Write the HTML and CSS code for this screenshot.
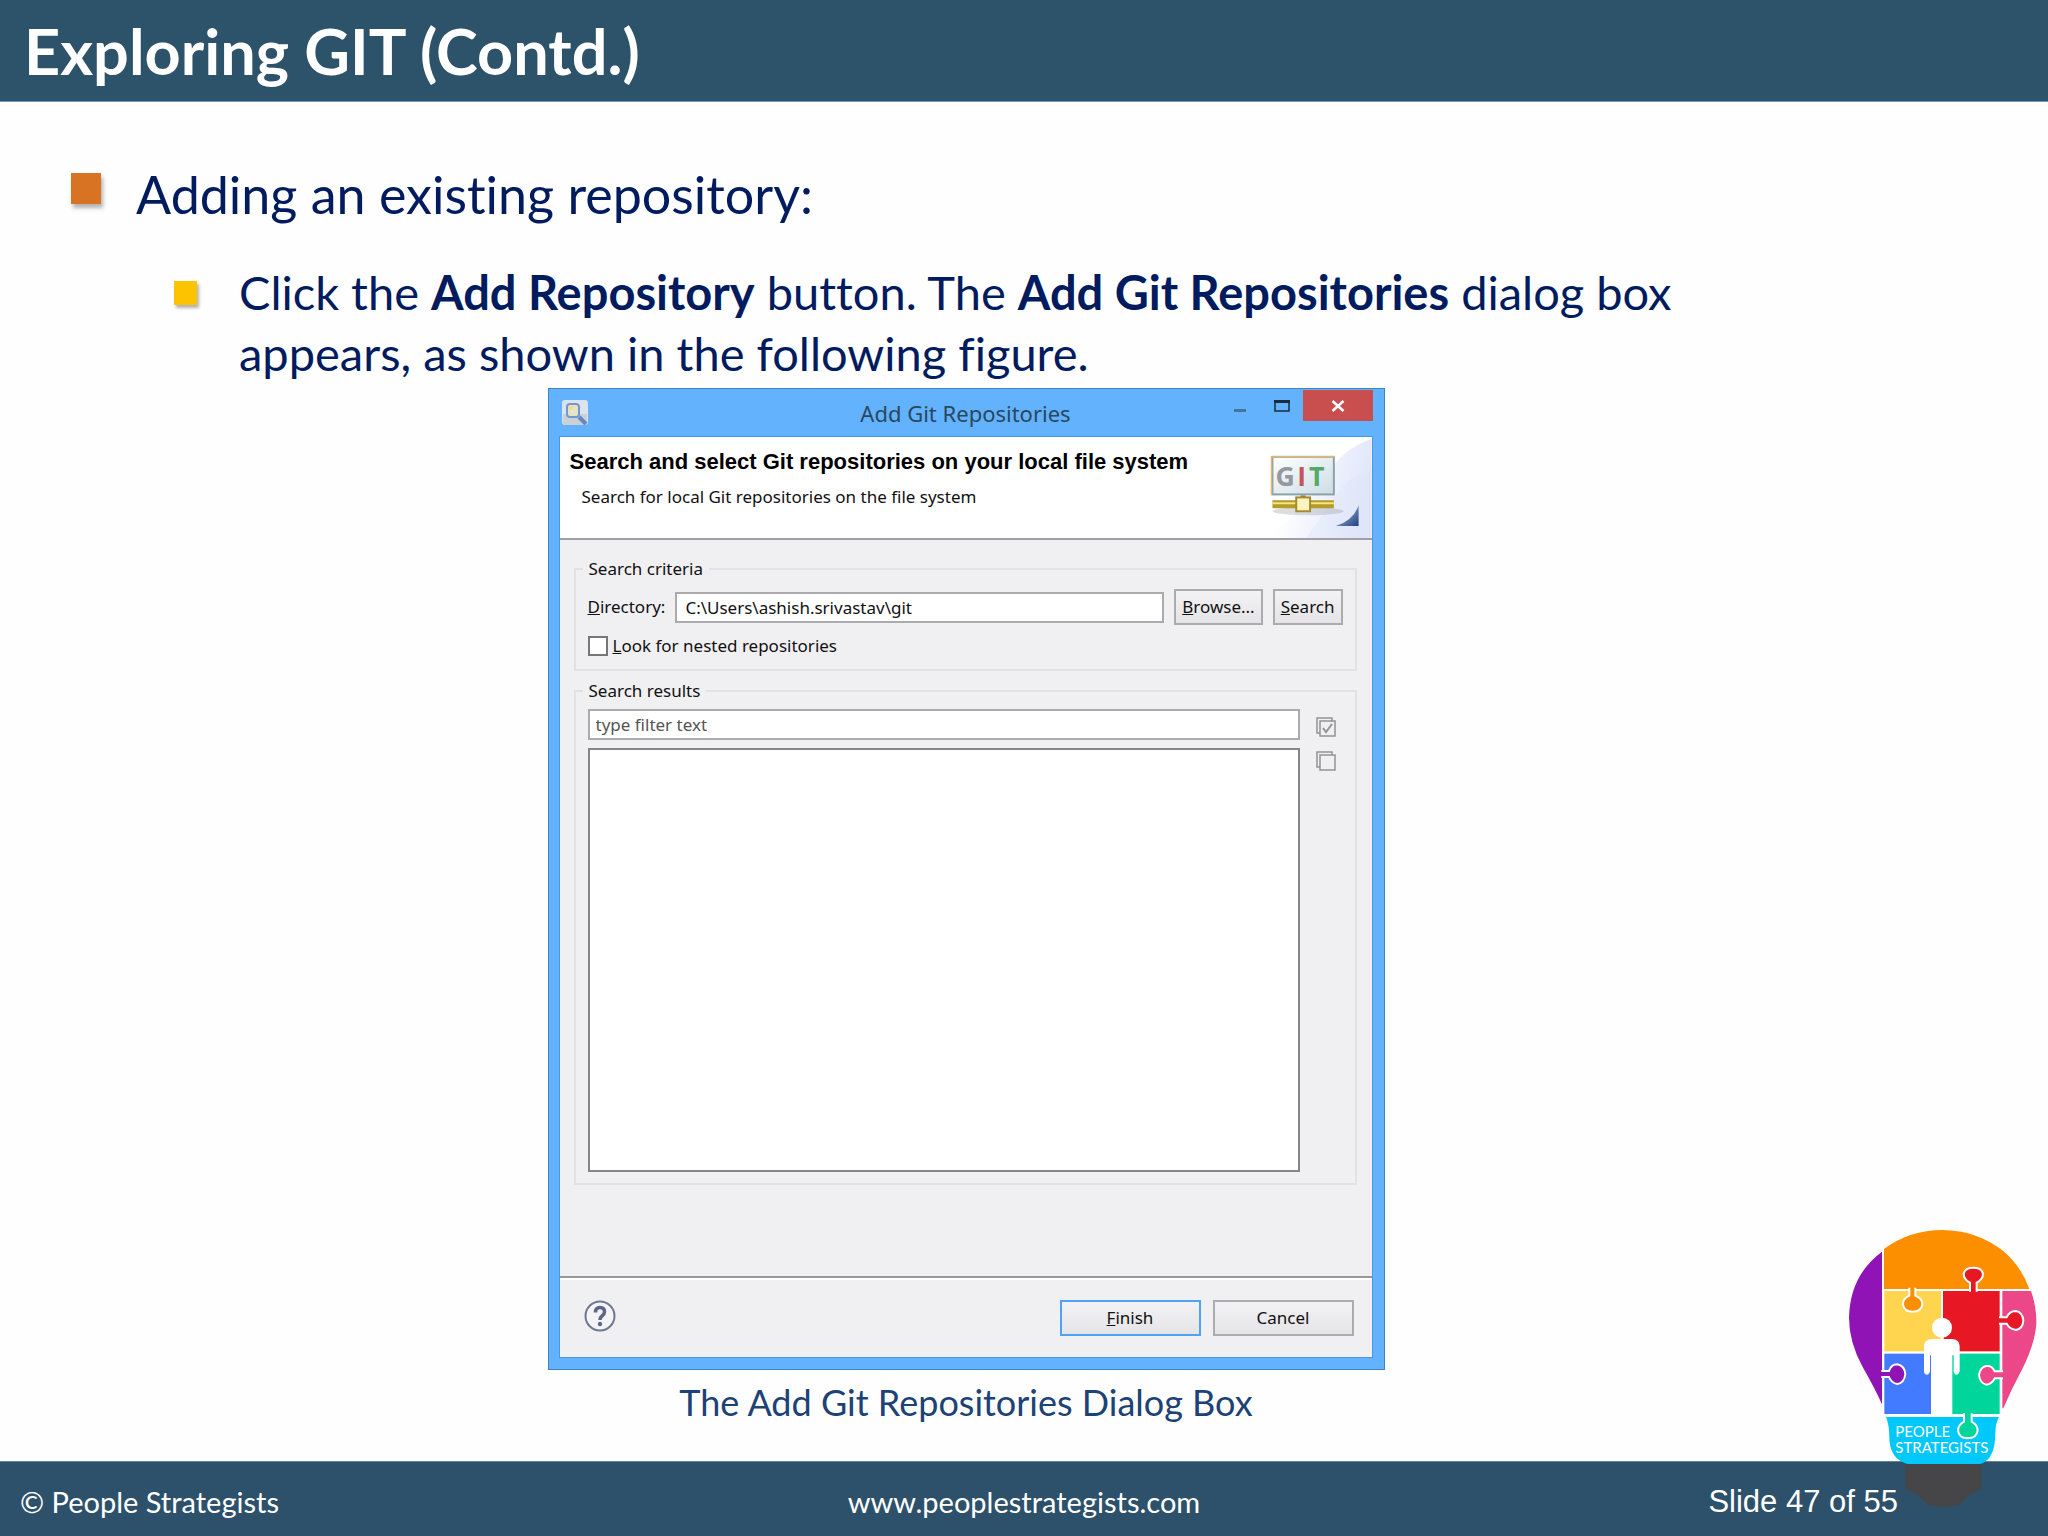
FILE: index.html
```html
<!DOCTYPE html>
<html lang="en">
<head>
    <meta charset="UTF-8">
    <meta name="viewport" content="width=device-width, initial-scale=1.0">
    <title>Exploring GIT (Contd.)</title>
    <link rel="stylesheet" href="styles.css">
</head>
<body>
    <header class="slide-header">
        <h1>Exploring GIT (Contd.)</h1>
    </header>

    <main class="slide-body">
        <ul class="points">
            <li class="point">Adding an existing repository:</li>
            <li class="subpoint">
                <p>Click the <b>Add Repository</b> button. The <b>Add Git Repositories</b> dialog box<br>appears, as shown in the following figure.</p>
            </li>
        </ul>

        <figure class="figure">
            <div class="dialog">
                <div class="titlebar">
                    <svg class="app-icon" viewBox="0 0 26 26">
                        <rect x="0" y="0" width="26" height="25" rx="3" fill="#dde3ec"/>
                        <path d="M1 14h24v8q0 3-3 3H4q-3 0-3-3z" fill="#cbcfd6"/>
                        <rect x="5" y="4" width="12" height="13" rx="3" fill="#e9e3c6" stroke="#6e9ad2" stroke-width="2"/>
                        <path d="M7 7l5-1-5 6z" fill="#fbd98a"/>
                        <path d="M17 17l7 7" stroke="#6488c0" stroke-width="4"/>
                    </svg>
                    <span class="titlebar-text">Add Git Repositories</span>
                    <div class="window-buttons">
                        <button class="win-btn" aria-label="Minimize">
                            <svg viewBox="0 0 18 14"><path d="M3 11.500h12" stroke="#45749f" stroke-width="3"/></svg>
                        </button>
                        <button class="win-btn" aria-label="Maximize">
                            <svg viewBox="0 0 18 14"><path d="M2 2h14v10H2z" fill="none" stroke="#1b2c3a" stroke-width="1.500"/><path d="M1 2.500h16" stroke="#1b2c3a" stroke-width="3"/></svg>
                        </button>
                        <button class="win-btn win-close" aria-label="Close">
                            <svg viewBox="0 0 18 14"><path d="M3.500 2l11 10M14.500 2l-11 10" stroke="#fff" stroke-width="2.500"/></svg>
                        </button>
                    </div>
                </div>

                <div class="dialog-content">
                    <div class="banner">
                        <div class="banner-text">
                            <h2>Search and select Git repositories on your local file system</h2>
                            <p>Search for local Git repositories on the file system</p>
                        </div>
                        <svg class="banner-icon" viewBox="0 0 106 102">
                            <defs>
                                <linearGradient id="sky" x1="0" y1="0.300" x2="1" y2="0.500">
                                    <stop offset="0.200" stop-color="#fff"/>
                                    <stop offset="1" stop-color="#dfe5fa"/>
                                </linearGradient>
                                <linearGradient id="screen" x1="0" y1="0" x2="1" y2="1">
                                    <stop offset="0" stop-color="#fff"/>
                                    <stop offset="1" stop-color="#cbdde6"/>
                                </linearGradient>
                                <linearGradient id="corner" x1="0" y1="0" x2="1" y2="1">
                                    <stop offset="0" stop-color="#b9cbe4"/>
                                    <stop offset="1" stop-color="#1f3f80"/>
                                </linearGradient>
                            </defs>
                            <path d="M106 2Q76 12 60 40T0 102H106z" fill="url(#sky)"/>
                            <path d="M106 33Q86 38 72 56L40 102H106z" fill="#dfe5fa" opacity=".4"/>
                            <ellipse cx="42" cy="75" rx="36" ry="4" fill="#8a8f9c" opacity=".3"/>
                            <rect x="6" y="20" width="62" height="38" fill="url(#screen)" stroke="#8ba2a4" stroke-width="2"/>
                            <path d="M5 58V20H69" fill="none" stroke="#e3b672" stroke-width="1.500"/>
                            <g class="git-letters">
                                <text x="9" y="49" fill="#97999c">G</text>
                                <text x="31" y="49" fill="#c4555d">I</text>
                                <text x="43" y="49" fill="#57a866">T</text>
                            </g>
                            <path d="M37 59v5" stroke="#8c8340" stroke-width="5"/>
                            <path d="M6 68h62" stroke="#b59b27" stroke-width="8"/>
                            <path d="M6 67h62" stroke="#f4e58b" stroke-width="2"/>
                            <rect x="30" y="61" width="14" height="14" fill="#fdf3c0" stroke="#a48a2a" stroke-width="2"/>
                            <path d="M93 69V90H70Q88 84 93 69z" fill="url(#corner)"/>
                        </svg>
                    </div>

                    <form class="wizard">
                        <fieldset class="group">
                            <legend>Search criteria</legend>
                            <div class="directory-row">
                                <label for="directory"><u>D</u>irectory:</label>
                                <input type="text" id="directory" value="C:\Users\ashish.srivastav\git">
                                <button type="button" class="btn"><u>B</u>rowse...</button>
                                <button type="button" class="btn"><u>S</u>earch</button>
                            </div>
                            <div class="nested-row">
                                <input type="checkbox" id="nested">
                                <label for="nested"><u>L</u>ook for nested repositories</label>
                            </div>
                        </fieldset>

                        <fieldset class="group">
                            <legend>Search results</legend>
                            <div class="results">
                                <div class="results-main">
                                    <input type="text" aria-label="Filter" placeholder="type filter text">
                                    <div class="results-list"></div>
                                </div>
                                <div class="results-tools">
                                    <button type="button" class="tool" aria-label="Select all">
                                        <svg viewBox="0 0 20 20" fill="none" stroke="#929297" stroke-width="1.500"><path d="M4 16H1V1h15v3"/><rect x="4" y="4" width="15" height="15"/><path d="M7 11l3 4 6-8" stroke-width="2"/></svg>
                                    </button>
                                    <button type="button" class="tool" aria-label="Deselect all">
                                        <svg viewBox="0 0 20 20" fill="none" stroke="#929297" stroke-width="1.500"><path d="M4 16H1V1h15v3"/><rect x="4" y="4" width="15" height="15"/></svg>
                                    </button>
                                </div>
                            </div>
                        </fieldset>
                    </form>

                    <div class="dialog-footer">
                        <button type="button" class="tool help" aria-label="Help">
                            <svg viewBox="0 0 32 32">
                                <circle cx="16" cy="16" r="14.500" fill="#f4f4f7" stroke="#6f7891" stroke-width="2"/>
                                <path d="M11.500 12.500q0-5 4.500-5t4.500 4.300q0 2.400-2.500 4.200-2 1.500-2 4" fill="none" stroke="#5d6788" stroke-width="3.500"/>
                                <circle cx="16" cy="24" r="2.200" fill="#5d6788"/>
                            </svg>
                        </button>
                        <button type="button" class="btn btn-wide btn-default"><u>F</u>inish</button>
                        <button type="button" class="btn btn-wide">Cancel</button>
                    </div>
                </div>
            </div>
            <figcaption>The Add Git Repositories Dialog Box</figcaption>
        </figure>
    </main>

    <footer class="slide-footer">
        <span class="copyright">© People Strategists</span>
        <span class="site">www.peoplestrategists.com</span>
        <span class="page-number">Slide 47 of 55</span>
        <svg class="logo" viewBox="84 56 570 837" role="img" aria-label="People Strategists">
            <!-- bulb base -->
            <path d="M256 755H484V836Q440 852 420 884Q370 894 324 884Q300 852 256 836z" fill="#464547"/>
            <path d="M198 620H537Q526 640 526 668Q526 748 480 761H262Q208 745 208 680Q208 645 198 620z" fill="#00c8fa"/>
            <!-- outer pieces -->
            <path d="M186 124V582Q165 535 128 470Q87 395 87 322Q90 195 186 124z" fill="#9013b6"/>
            <path d="M192 116Q268 59 368 59Q470 60 550 122Q605 170 628 236H192z" fill="#fc8f00"/>
            <path d="M547 242H633Q650 290 649 340Q645 400 605 480Q575 535 550 594H547z" fill="#ec4788"/>
            <!-- inner pieces -->
            <rect x="193" y="242" width="170" height="181" fill="#ffd54f"/>
            <rect x="369" y="242" width="170" height="181" fill="#e71824"/>
            <rect x="193" y="430" width="170" height="181" fill="#427bff"/>
            <rect x="369" y="430" width="170" height="181" fill="#00d59c"/>
            <!-- tabs -->
            <g stroke="#fff" stroke-width="6">
                <path d="M268 232V256Q249 264 249 282Q252 304 278 304Q304 304 307 282Q307 264 286 256V232" fill="#fc8f00"/>
                <path d="M450 244V217Q431 207 431 191Q434 172 460 172Q486 172 489 191Q489 207 470 217V244" fill="#e71824"/>
                <path d="M537 321H560Q568 302 588 302Q608 306 610 331Q608 356 588 359Q568 356 560 340H537" fill="#e71824"/>
                <path d="M184 482H207Q214 462 232 462Q253 466 256 491Q253 518 232 521Q214 518 207 500H184" fill="#9013b6"/>
                <path d="M549 483H524Q517 466 500 466Q480 470 477 494Q480 520 500 523Q517 520 524 504H549" fill="#ec4788"/>
                <path d="M432 609V634Q414 644 414 661Q417 684 443 684Q470 684 473 661Q473 644 455 634V609" fill="#00d59c"/>
            </g>
            <!-- person -->
            <g fill="#fff">
                <circle cx="366" cy="352" r="30"/>
                <path d="M334 386H398Q419 388 419 408V482Q417 493 408 493Q401 492 401 482V435H397V612H333V435H330V482Q328 493 320 493Q312 492 312 482V408Q312 388 334 386z"/>
                <path d="M362 378h9v10h-9z"/>
            </g>
            <g class="logo-text">
                <text x="226" y="679">PEOPLE</text>
                <text x="226" y="729">STRATEGISTS</text>
            </g>
        </svg>
    </footer>
</body>
</html>
```
FILE: styles.css
```css
* {
    box-sizing: border-box;
}

body {
    margin: 0;
    min-height: 100vh;
    display: flex;
    flex-direction: column;
    background-color: #fefefe;
    font-family: Lato, "Liberation Sans", sans-serif;
    font-variant-ligatures: none;
    color: #001b5e;
}

h1, h2, p, ul, figure {
    margin: 0;
    padding: 0;
}

button {
    font: inherit;
    color: inherit;
    padding: 0;
}

/* Slide header */
.slide-header {
    height: 102px;
    padding: 0 24px;
    display: flex;
    align-items: center;
    background-color: #2d536b;
    border-bottom: 1px solid #6f9db5;
}

.slide-header h1 {
    font-size: 63px;
    line-height: 72px;
    color: white;
}

/* Bullets */
.slide-body {
    flex: 1;
}

.points {
    list-style: none;
    padding: 62px 280px 0 71px;
}

.point, .subpoint {
    display: flex;
    align-items: flex-start;
}

.point {
    font-size: 52px;
    line-height: 60px;
}

.point::before {
    content: "";
    flex: none;
    width: 30px;
    height: 31px;
    margin: 9px 35px 0 0;
    background-color: #d97324;
    box-shadow: 2px 4px 4px rgba(0, 0, 0, 0.3);
}

.subpoint {
    margin: 38px 0 0 103px;
    font-size: 47px;
    line-height: 61px;
}

.subpoint::before {
    content: "";
    flex: none;
    width: 23px;
    height: 24px;
    margin: 19px 42px 0 0;
    background-color: #fdc300;
    box-shadow: 2px 3px 3px rgba(0, 0, 0, 0.3);
}

/* Figure */
.figure {
    display: flex;
    flex-direction: column;
    align-items: center;
    padding: 4px 116px 0 0;
}

figcaption {
    margin-top: 10px;
    font-size: 36px;
    line-height: 44px;
    color: #1c4276;
}

/* Dialog window */
.dialog {
    width: 100%;
    max-width: 837px;
    padding: 0 11px 11px 10px;
    background-color: #63b2fd;
    border: 1px solid #3d83c0;
    font-family: "Noto Sans", "Open Sans", sans-serif;
    font-size: 17px;
    line-height: 24px;
    color: #111;
}

.titlebar {
    position: relative;
    height: 47px;
    display: flex;
    align-items: center;
    justify-content: center;
}

.titlebar-text {
    font-size: 22px;
    color: #29475f;
}

.app-icon {
    position: absolute;
    left: 3px;
    top: 11px;
    width: 26px;
    height: 26px;
}

.window-buttons {
    position: absolute;
    top: 1px;
    right: 0;
    display: flex;
}

.win-btn {
    display: flex;
    align-items: center;
    justify-content: center;
    width: 42px;
    height: 31px;
    border: none;
    background: none;
}

.win-btn svg {
    width: 18px;
    height: 14px;
}

.win-close {
    width: 70px;
    background-color: #c94f4f;
}

.dialog-content {
    background-color: #f0eff1;
    border: 1px solid #4a98df;
}

.banner {
    height: 103px;
    display: flex;
    justify-content: space-between;
    background-color: white;
    border-bottom: 2px solid #a0a0a4;
}

.banner-text {
    padding: 11px 0 0 10px;
}

.banner h2 {
    font-family: "Liberation Sans", Arial, sans-serif;
    font-size: 22px;
    line-height: 28px;
    color: black;
}

.banner p {
    margin-top: 9px;
    padding-left: 12px;
}

.banner-icon {
    width: 106px;
    height: 101px;
}

.git-letters {
    font-family: "Open Sans", sans-serif;
    font-size: 27px;
    font-weight: bold;
}

/* Form */
.wizard {
    height: 736px;
    padding: 17px 15px 0 14px;
}

.group {
    margin: 0 0 8px;
    padding: 0 12px 11px;
    border: 2px solid #e2e2e4;
}

.group legend {
    margin-left: -5px;
    padding: 0 6px;
}

input[type="text"] {
    width: 100%;
    height: 31px;
    padding: 0 8px;
    font: inherit;
    color: #111;
    background-color: white;
    border: 2px solid #ababae;
    border-radius: 0;
}

input::placeholder {
    color: #555;
    opacity: 1;
}

.directory-row {
    display: flex;
    align-items: center;
    gap: 10px;
    padding-top: 8px;
}

.directory-row input {
    flex: 1;
}

.btn {
    height: 36px;
    padding: 0 6px;
    background: linear-gradient(#f2f1f3, #e5e4e6);
    border: 2px solid #acacaf;
}

.nested-row {
    display: flex;
    align-items: center;
    gap: 5px;
    padding-top: 9px;
}

.nested-row input {
    appearance: none;
    width: 20px;
    height: 20px;
    margin: 0;
    background-color: white;
    border: 2px solid #77777a;
}

.results {
    display: flex;
    padding-top: 6px;
}

.results-main {
    flex: 1;
}

.results-main input {
    padding: 0 6px;
}

.results-list {
    height: 424px;
    margin-top: 8px;
    background-color: white;
    border: 2px solid #85858a;
}

.results-tools {
    display: flex;
    flex-direction: column;
    gap: 14px;
    padding: 8px 7px 0 16px;
}

.tool {
    width: 20px;
    height: 20px;
    border: none;
    background: none;
}

.tool svg {
    display: block;
}

.dialog-footer {
    display: flex;
    align-items: flex-start;
    gap: 12px;
    height: 81px;
    padding: 22px 18px 0 24px;
    border-top: 2px solid #98989b;
    box-shadow: inset 0 2px white;
}

.help {
    width: 32px;
    height: 32px;
    margin-right: auto;
}

.btn-wide {
    width: 141px;
}

.btn-default {
    border-color: #4ea3f5;
}

/* Slide footer */
.slide-footer {
    position: relative;
    height: 75px;
    padding: 6px 20px 0;
    display: grid;
    grid-template-columns: 1fr auto 1fr;
    align-items: center;
    background-color: #2d516a;
    border-top: 1px solid #5b8497;
    font-size: 29px;
    line-height: 36px;
    color: white;
}

.page-number {
    justify-self: end;
    margin-right: 130px;
    font-family: "Liberation Sans", Arial, sans-serif;
    font-size: 31px;
}

.logo {
    position: absolute;
    right: 10px;
    bottom: 28px;
    width: 190px;
    height: 279px;
}

.logo-text {
    font-family: Lato, sans-serif;
    font-size: 45px;
    fill: white;
}
```
